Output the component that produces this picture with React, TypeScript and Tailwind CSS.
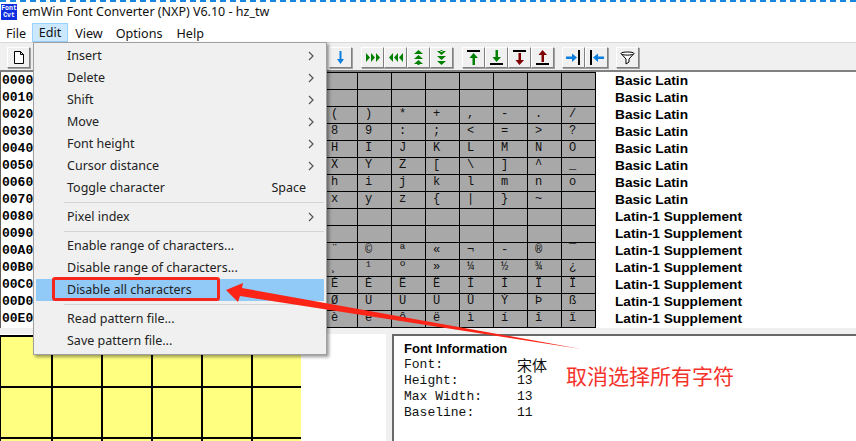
import React from 'react';

const UI = "font-['Noto_Sans','Liberation_Sans',sans-serif]";

const rows: [string, string[]][] = [
    ['0000', []],
    ['0010', []],
    ['0020', ['(', ')', '*', '+', ',', '-', '.', '/']],
    ['0030', ['8', '9', ':', ';', '<', '=', '>', '?']],
    ['0040', ['H', 'I', 'J', 'K', 'L', 'M', 'N', 'O']],
    ['0050', ['X', 'Y', 'Z', '[', '\\', ']', '^', '_']],
    ['0060', ['h', 'i', 'j', 'k', 'l', 'm', 'n', 'o']],
    ['0070', ['x', 'y', 'z', '{', '|', '}', '~', '']],
    ['0080', []],
    ['0090', []],
    ['00A0', ['¨', '©', 'ª', '«', '¬', '-', '®', '¯']],
    ['00B0', ['¸', '¹', 'º', '»', '¼', '½', '¾', '¿']],
    ['00C0', ['È', 'É', 'Ê', 'Ë', 'Ì', 'Í', 'Î', 'Ï']],
    ['00D0', ['Ø', 'Ù', 'Ú', 'Û', 'Ü', 'Ý', 'Þ', 'ß']],
    ['00E0', ['è', 'é', 'ê', 'ë', 'ì', 'í', 'î', 'ï']],
];

const blockName = (hex: string) => (parseInt(hex, 16) < 0x80 ? 'Basic Latin' : 'Latin-1 Supplement');

const G = '#008000';
const R = '#800000';
const B = '#0a7fe0';

const ToolButton: React.FC<{ children?: React.ReactNode; className?: string }> = ({ children, className = '' }) => (
    <div className={`w-[23px] h-[21px] bg-[#f0f0f0] border border-t-white border-l-white border-r-[#808080] border-b-[#808080] shadow-[1px_1px_0_#a0a0a0] flex items-center justify-center ${className}`}>
        <svg width="17" height="17" viewBox="0 0 17 17">{children}</svg>
    </div>
);

const Tri = ({ d, fill }: { d: string; fill: string }) => <path d={d} fill={fill} />;

const MenuItem: React.FC<{ label: string; arrow?: boolean; hint?: string; active?: boolean }> = ({ label, arrow, hint, active }) => (
    <div className={`relative h-[22px] flex items-center pr-[14px] text-[12.5px] text-[#222] ${active ? 'bg-[#91c9f7] mx-[2px] pl-[31px]' : 'pl-[33px]'}`}>
        <span className="flex-1 whitespace-nowrap">{label}</span>
        {hint && <span className="mr-[6px]">{hint}</span>}
        {arrow && (
            <svg width="6" height="10" viewBox="0 0 6 10" className="mr-[-2px]">
                <path d="M1 1l4 4-4 4" fill="none" stroke="#555" strokeWidth="1.2" />
            </svg>
        )}
    </div>
);

const MenuSep = () => (
    <div className="h-[7px] flex items-center pl-[30px] pr-[2px]">
        <div className="h-px w-full bg-[#d4d4d4]" />
    </div>
);

export default function App() {
    return (
        <div className={`relative w-[856px] h-[441px] overflow-hidden bg-white flex flex-col ${UI}`}>
            {/* title bar */}
            <div className="h-[22px] shrink-0 border-t-2 border-dashed border-[#1a86e0] flex items-center pl-[1px]">
                <div className="w-[16px] h-[16px] bg-[#1030e0] text-white font-['Liberation_Mono',monospace] text-[6.5px] leading-[7px] font-bold flex flex-col items-center justify-center">
                    <span>Font</span>
                    <span>Cvt</span>
                </div>
                <span className="ml-[5px] pt-[1px] text-[12.5px] text-[#111] whitespace-nowrap">emWin Font Converter (NXP) V6.10 - hz_tw</span>
            </div>

            {/* menu bar */}
            <div className="h-[20px] shrink-0 flex items-center text-[12.6px] leading-[19px] text-[#111]">
                <span className="ml-[6px] pt-[2px]">File</span>
                <span className="ml-[6px] w-[36px] h-[19px] pt-[1px] bg-[#cce8ff] border border-[#99d1ff] flex items-center justify-center">Edit</span>
                <span className="ml-[7px] pt-[2px]">View</span>
                <span className="ml-[13px] pt-[2px]">Options</span>
                <span className="ml-[14px] pt-[2px]">Help</span>
            </div>

            {/* toolbar */}
            <div className="h-[30px] shrink-0 bg-[#f0f0f0] border-t border-[#d8d8d8] border-b-2 border-b-[#808080] flex items-start pt-[4px]">
                <ToolButton className="ml-[7px]">
                    <path d="M4.5 2.5h6l3 3v9h-9z M10.5 2.5v3h3" fill="#fff" stroke="#000" />
                </ToolButton>
                <ToolButton className="ml-[299px]">
                    <path d="M7.5 2h2v8h2.5l-3.5 5-3.5-5h2.500z" fill={B} />
                </ToolButton>
                <ToolButton className="ml-[9px]">
                    <Tri fill={G} d="M2 4l4 4.500-4 4.500z M7 4l4 4.500-4 4.500z M12 4l4 4.500-4 4.500z" />
                </ToolButton>
                <ToolButton>
                    <Tri fill={G} d="M6 4l-4 4.500 4 4.500z M11 4l-4 4.500 4 4.500z M16 4l-4 4.500 4 4.500z" />
                </ToolButton>
                <ToolButton>
                    <Tri fill={G} d="M8.500 1l4.500 4h-9z M8.500 6l4.500 4h-9z M8.500 11l4.500 4h-9z M7.500 14h2v2h-2z" />
                </ToolButton>
                <ToolButton>
                    <Tri fill={G} d="M8.500 16l4.500-4h-9z M8.500 11l4.500-4h-9z M8.500 6l4.500-4h-9z M7.500 1h2v2h-2z" />
                </ToolButton>
                <ToolButton className="ml-[9px]">
                    <path d="M2 1h13v2H2z" fill="#000" />
                    <path d="M8.500 4l4.500 5h-3v7H7.500V9h-3z" fill={G} />
                </ToolButton>
                <ToolButton>
                    <path d="M2 14h13v2H2z" fill="#000" />
                    <path d="M8.500 13l4.500-5h-3V1H7.500v7h-3z" fill={G} />
                </ToolButton>
                <ToolButton>
                    <path d="M2 1h13v2H2z" fill="#000" />
                    <path d="M8.500 16l4.500-5h-3V4H7.500v7h-3z" fill={R} />
                </ToolButton>
                <ToolButton>
                    <path d="M2 14h13v2H2z" fill="#000" />
                    <path d="M8.500 1l4.500 5h-3v7H7.500V6h-3z" fill={R} />
                </ToolButton>
                <ToolButton className="ml-[8px]">
                    <path d="M13 1h2v15h-2z" fill="#000" />
                    <path d="M12 8.500l-5-4v3H1v2.500h6v3z" fill={B} />
                </ToolButton>
                <ToolButton>
                    <path d="M2 1h2v15H2z" fill="#000" />
                    <path d="M5 8.500l5-4v3h6v2.500h-6v3z" fill={B} />
                </ToolButton>
                <ToolButton className="ml-[8px]">
                    <path d="M2 4.500c0-2 13-2 13 0L10 10v3l-3 2v-5z M2.500 5c2 1.500 10 1.500 12 0" fill="#fff" stroke="#000" />
                </ToolButton>
            </div>

            {/* character table */}
            <div className="h-[256px] shrink-0 overflow-hidden border-l border-[#606060]">
                {rows.map(([hex, chars]) => (
                    <div key={hex} className="flex h-[17px]">
                        <div className="w-[50px] pl-[1px] font-['Liberation_Mono',monospace] font-bold text-[13px] leading-[18px] text-black">{hex}</div>
                        {Array.from({ length: 16 }).map((_, i) => (
                            <div key={i} className={`w-[34px] border-t border-l border-black bg-[#a8a8a8] pl-[7px] font-['Liberation_Mono',monospace] text-[12px] leading-[14px] text-[#111] ${i === 15 ? 'border-r w-[35px]' : ''}`}>
                                {i >= 8 ? chars[i - 8] : ''}
                            </div>
                        ))}
                        <div className="pl-[19px] font-['Liberation_Sans',sans-serif] font-bold text-[13.7px] leading-[17px] text-black whitespace-nowrap">{blockName(hex)}</div>
                    </div>
                ))}
                <div className="ml-[50px] w-[545px] border-t border-black h-px bg-[#a8a8a8]" />
            </div>

            {/* splitter */}
            <div className="h-[6px] shrink-0 bg-[#f0f0f0]" />

            {/* bottom panes */}
            <div className="flex-1 flex min-h-0">
                <div className="w-[386px] shrink-0 overflow-hidden">
                    <div className="w-[301px] mt-[1px] grid grid-cols-[50px_48px_48px_48px_48px_48px] auto-rows-[49px] gap-[2px] bg-black pt-[2px] pl-[1px] pr-[1px]">
                        {Array.from({ length: 18 }).map((_, i) => (
                            <div key={i} className="bg-[#ffff80]" />
                        ))}
                    </div>
                </div>
                <div className="w-[6px] shrink-0 bg-[#f0f0f0]" />
                <div className="flex-1 border-t-2 border-l-2 border-[#696969] pl-[10px] pt-[5px]">
                    <div className="font-['Liberation_Sans',sans-serif] font-bold text-[13px] leading-[15px] text-black">Font Information</div>
                    <div className="mt-[1px] font-['Liberation_Mono',monospace] text-[13px] leading-[16px] text-[#111]">
                        <div className="flex h-[16px]"><span className="w-[113px]">Font:</span><span className="font-['Noto_Sans_CJK_SC',sans-serif] text-[15px]">宋体</span></div>
                        <div className="flex h-[16px]"><span className="w-[113px]">Height:</span><span>13</span></div>
                        <div className="flex h-[16px]"><span className="w-[113px]">Max Width:</span><span>13</span></div>
                        <div className="flex h-[16px]"><span className="w-[113px]">Baseline:</span><span>11</span></div>
                    </div>
                </div>
            </div>

            {/* open Edit menu */}
            <div className="absolute left-[33px] top-[42px] w-[294px] h-[313px] bg-[#f0f0f0] border border-[#a0a0a0] shadow-[2px_2px_3px_rgba(0,0,0,0.4)] pt-[2px]">
                <MenuItem label="Insert" arrow />
                <MenuItem label="Delete" arrow />
                <MenuItem label="Shift" arrow />
                <MenuItem label="Move" arrow />
                <MenuItem label="Font height" arrow />
                <MenuItem label="Cursor distance" arrow />
                <MenuItem label="Toggle character" hint="Space" />
                <MenuSep />
                <MenuItem label="Pixel index" arrow />
                <MenuSep />
                <MenuItem label="Enable range of characters..." />
                <MenuItem label="Disable range of characters..." />
                <MenuItem label="Disable all characters" active />
                <MenuSep />
                <MenuItem label="Read pattern file..." />
                <MenuItem label="Save pattern file..." />
                {/* red callout box */}
                <div className="absolute left-[18px] top-[234px] w-[168px] h-[24px] border-[3px] border-[#f5261c] rounded-[3px]" />
            </div>

            {/* annotation arrow */}
            <svg className="absolute left-0 top-0 pointer-events-none" width="856" height="441" viewBox="0 0 856 441">
                <polygon points="226,290 243,283 242,288 581,349 240,296 238,302" fill="#fb2417" />
            </svg>
            <div className="absolute left-[566px] top-[360px] font-['Noto_Sans_CJK_SC',sans-serif] text-[21px] leading-[30px] text-[#f5322a] whitespace-nowrap">取消选择所有字符</div>
        </div>
    );
}
